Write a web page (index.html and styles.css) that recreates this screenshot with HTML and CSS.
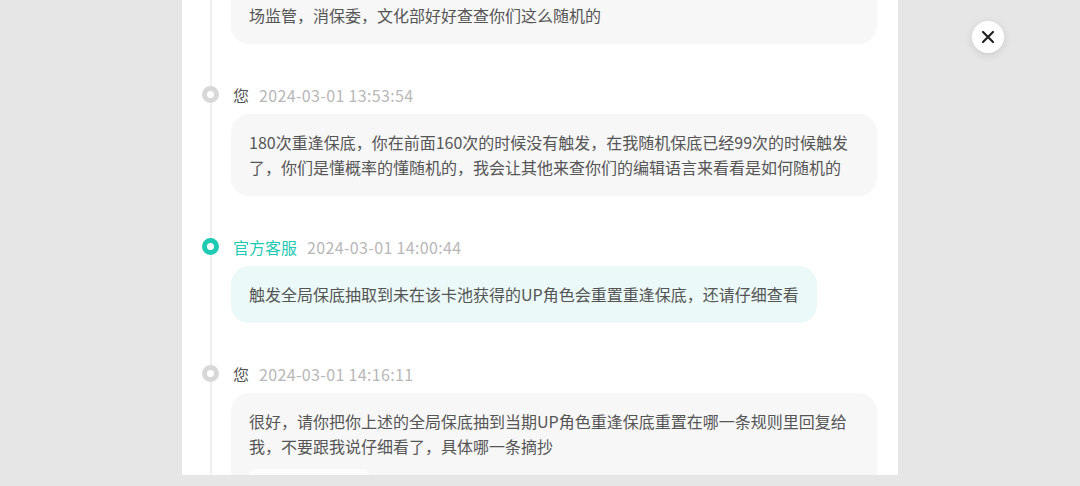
FILE: index.html
```html
<!doctype html>
<html lang="zh-CN">
  <head>
    <meta charset="UTF-8" />
    <meta name="viewport" content="width=device-width, initial-scale=1.0" />
    <title>工单详情</title>
    <link rel="stylesheet" href="styles.css">
  </head>
  <body>
    <div class="panel">
      <ul class="timeline">
        <li class="entry">
          <div class="entry-head">
            <span class="who">您</span>
            <span class="time">2024-03-01 13:40:12</span>
          </div>
          <div class="bubble">你们这样的概率根本就不是随机，我已经保存好了所有的抽卡记录和截图，我会去找市场监管，消保委，文化部好好查查你们这么随机的</div>
        </li>
        <li class="entry">
          <div class="entry-head">
            <span class="who">您</span>
            <span class="time">2024-03-01 13:53:54</span>
          </div>
          <div class="bubble">180次重逢保底，你在前面160次的时候没有触发，在我随机保底已经99次的时候触发了，你们是懂概率的懂随机的，我会让其他来查你们的编辑语言来看看是如何随机的</div>
        </li>
        <li class="entry staff">
          <div class="entry-head">
            <span class="who">官方客服</span>
            <span class="time">2024-03-01 14:00:44</span>
          </div>
          <div class="bubble">触发全局保底抽取到未在该卡池获得的UP角色会重置重逢保底，还请仔细查看</div>
        </li>
        <li class="entry">
          <div class="entry-head">
            <span class="who">您</span>
            <span class="time">2024-03-01 14:16:11</span>
          </div>
          <div class="bubble">
            很好，请你把你上述的全局保底抽到当期UP角色重逢保底重置在哪一条规则里回复给我，不要跟我说仔细看了，具体哪一条摘抄
            <div class="attachment"></div>
          </div>
        </li>
      </ul>
    </div>

    <button class="close" aria-label="关闭">
      <svg width="14" height="14" viewBox="0 0 14 14">
        <path d="M2 2 L12 12 M12 2 L2 12" stroke="#222" stroke-width="2.2" stroke-linecap="round" />
      </svg>
    </button>
  </body>
</html>
```

FILE: styles.css
```css
:root {
  --bg: #e6e6e6;
  --text: #555555;
  --muted: #b8b8b8;
  --accent: #1ecab3;
  --bubble: #f7f7f7;
  --bubble-staff: #ebf9f9;
  --line: #efefef;
}

*,
*::before,
*::after {
  box-sizing: border-box;
}

body {
  margin: 0;
  background: var(--bg);
  font-family: "Noto Sans CJK SC", "Noto Sans", sans-serif;
  color: var(--text);
}

.panel {
  width: 716px;
  height: 475px;
  margin: 0 auto;
  background: #fff;
  overflow: hidden;
  padding: 0 21px 0 49px;
}

.timeline {
  list-style: none;
  margin: -68px 0 0;
  padding: 0;
  position: relative;
}

/* vertical rail behind the dots */
.timeline::before {
  content: "";
  position: absolute;
  left: -21px;
  top: 0;
  bottom: -200px;
  width: 2px;
  background: var(--line);
}

.entry {
  position: relative;
  margin-bottom: 40px;
}

.entry::before {
  content: "";
  position: absolute;
  left: -29px;
  top: 2px;
  width: 17px;
  height: 17px;
  border-radius: 50%;
  border: 5px solid #d8d8d8;
  background: #fff;
}

.staff.entry::before {
  border-color: var(--accent);
}

.entry-head {
  display: flex;
  align-items: center;
  gap: 10px;
  height: 22px;
  padding-left: 2px;
  margin-bottom: 8px;
  font-size: 16px;
}

.who {
  color: #555;
}

.staff .who {
  color: var(--accent);
}

.time {
  color: var(--muted);
  letter-spacing: 0.35px;
}

.bubble {
  background: var(--bubble);
  border-radius: 18px;
  padding: 16px 18px;
  font-size: 16px;
  line-height: 25px;
}

.staff .bubble {
  background: var(--bubble-staff);
  width: fit-content;
}

.attachment {
  width: 120px;
  height: 80px;
  margin-top: 10px;
  border-radius: 6px;
  background: #fcfcfc;
}

.close {
  position: fixed;
  top: 21px;
  left: 972px;
  width: 32px;
  height: 32px;
  border: none;
  border-radius: 50%;
  background: #fff;
  box-shadow: 0 2px 8px rgba(0, 0, 0, 0.12);
  display: flex;
  align-items: center;
  justify-content: center;
  padding: 0;
  cursor: pointer;
}
```
